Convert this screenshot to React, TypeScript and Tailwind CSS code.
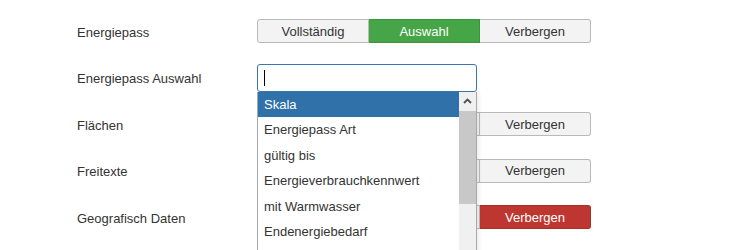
import React from "react";

type Active = "none" | "auswahl" | "verbergen-danger";

const options = ["Vollständig", "Auswahl", "Verbergen"];

const listItems = [
  "Skala",
  "Energiepass Art",
  "gültig bis",
  "Energieverbrauchkennwert",
  "mit Warmwasser",
  "Endenergiebedarf",
  "Primärenergiebedarf",
];

// covered = the dropdown lies over the first two segments
function ButtonGroup({ active, covered = false }: { active: Active; covered?: boolean }) {
  return (
    <div className="flex h-[24px] w-[334px]">
      {options.map((label, i) => {
        let cls = "bg-[#f3f3f3] text-[#333] border-[#b9b9b9]";
        if (active === "auswahl" && i === 1) cls = "bg-[#46a546] text-white border-[#3d923d]";
        if (active === "verbergen-danger" && i === 2) cls = "bg-[#bd362f] text-white border-[#a8302a]";
        const round = i === 0 ? "rounded-l-[3px]" : i === 2 ? "rounded-r-[3px]" : "";
        const edge = i === 0 ? "border" : "border border-l-0";
        return (
          <div
            key={label}
            className={`flex flex-1 items-center justify-center ${edge} ${round} ${cls} text-[13px]`}
          >
            <span className={covered && i < 2 ? "invisible" : ""}>{label}</span>
          </div>
        );
      })}
    </div>
  );
}

function Row({ label, children }: { label: string; children: React.ReactNode }) {
  return (
    <div className="flex h-[46.5px] items-center">
      <div className="w-[180px] pt-[2px] text-[13px] text-[#333]">{label}</div>
      {children}
    </div>
  );
}

function Dropdown() {
  return (
    <div className="absolute left-0 top-full z-10 h-[170px] w-[220px] overflow-hidden border-x border-[#a9a9a9] bg-white shadow-[2px_2px_4px_rgba(0,0,0,0.08)]">
      <div className="mr-[17px]">
        {listItems.map((item, i) => (
          <div
            key={item}
            className={`flex h-[25.5px] items-center px-[6px] text-[13px] ${
              i === 0 ? "bg-[#3071a9] text-white" : "text-[#333]"
            }`}
          >
            {item}
          </div>
        ))}
      </div>
      <div className="absolute right-0 top-0 flex h-full w-[17px] flex-col bg-[#f0f0f0]">
        <div className="flex h-[19px] items-center justify-center">
          <svg width="9" height="6" viewBox="0 0 9 6">
            <path d="M1 5 L4.5 1.5 L8 5" fill="none" stroke="#505050" strokeWidth="1.8" />
          </svg>
        </div>
        <div className="h-[93px] bg-[#c8c8c8]" />
      </div>
    </div>
  );
}

export default function App() {
  return (
    <div className="h-[250px] w-[730px] overflow-hidden bg-white pl-[77px] pt-[8px] font-['Liberation_Sans',Arial,sans-serif] text-[#333]">
      <Row label="Energiepass">
        <ButtonGroup active="auswahl" />
      </Row>
      <Row label="Energiepass Auswahl">
        <div className="relative z-10">
          <div className="flex h-[28px] w-[220px] items-center rounded-[3px] border border-[#3a77b2] bg-white px-[6px]">
            <span className="block h-[16px] w-px bg-black" />
          </div>
          <Dropdown />
        </div>
      </Row>
      <Row label="Flächen">
        <ButtonGroup active="none" covered />
      </Row>
      <Row label="Freitexte">
        <ButtonGroup active="none" covered />
      </Row>
      <Row label="Geografisch Daten">
        <ButtonGroup active="verbergen-danger" covered />
      </Row>
    </div>
  );
}
